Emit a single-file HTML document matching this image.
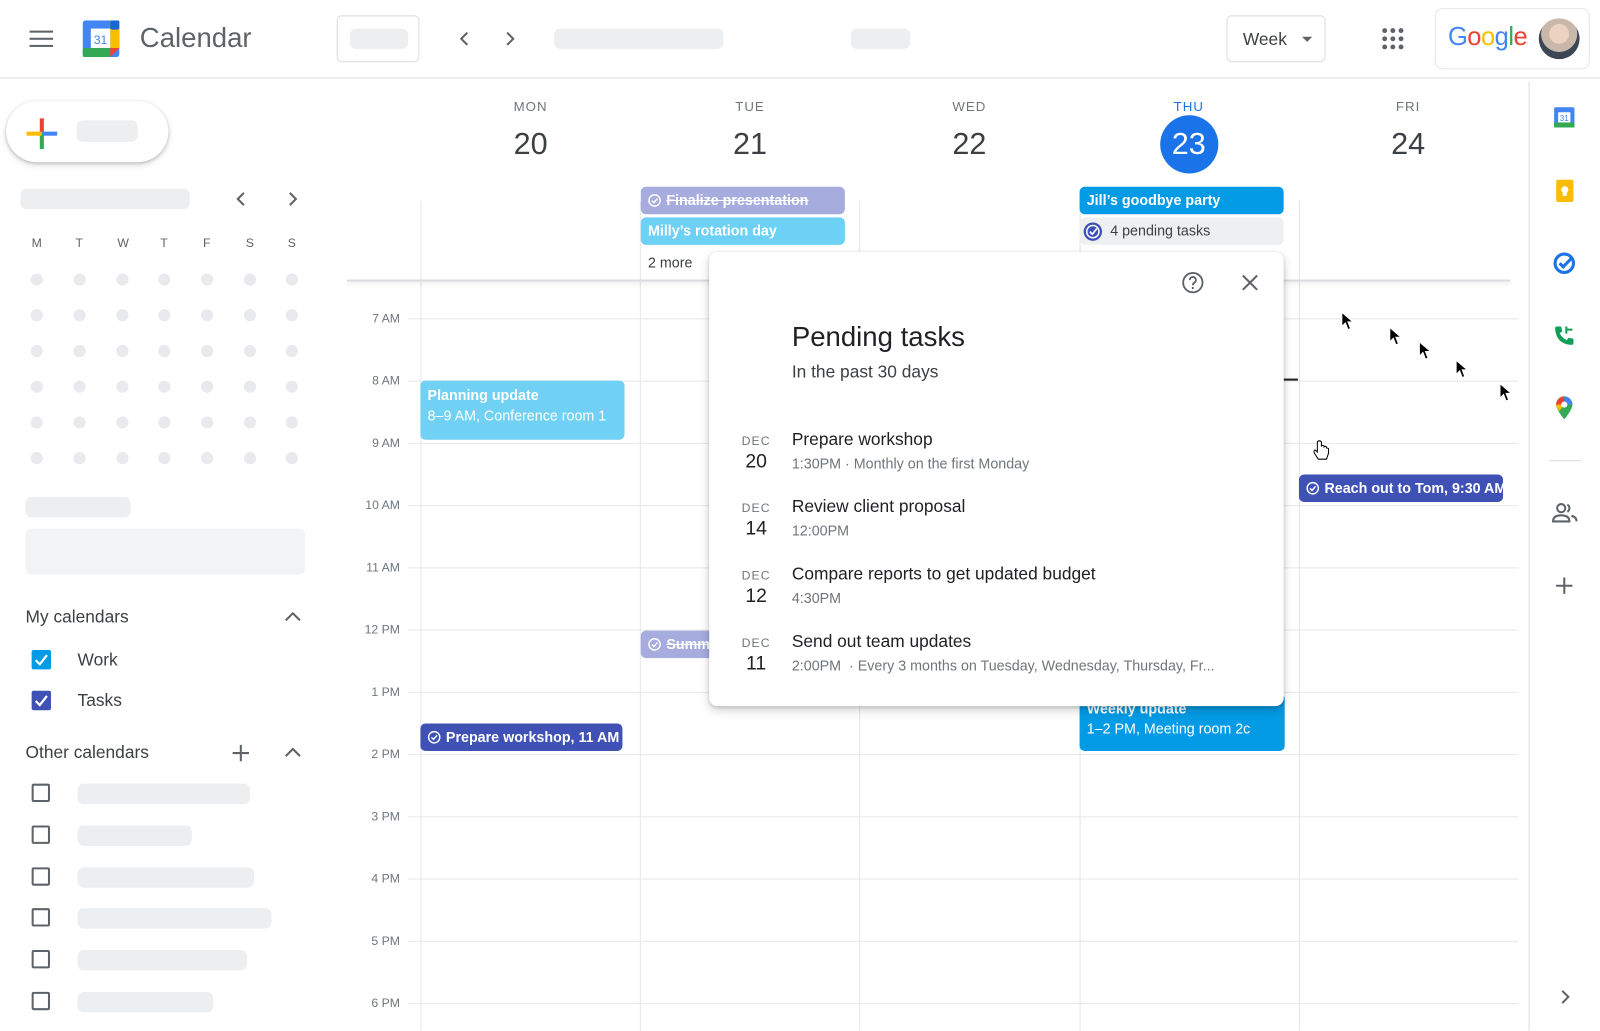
<!DOCTYPE html>
<html><head><meta charset="utf-8">
<style>
*{box-sizing:border-box;margin:0;padding:0}
html,body{width:1600px;height:1030px;overflow:hidden;background:#fff;font-family:"Liberation Sans",Arial,sans-serif;color:#3c4043}
#w{position:absolute;left:0;top:0;width:1568px;height:1010px;transform:scale(1.0204);transform-origin:0 0}
.a{position:absolute}
.sk{position:absolute;background:#eceef0;border-radius:6px}
.dot{position:absolute;width:12px;height:12px;border-radius:50%;background:#e8eaed}
.vl{position:absolute;width:1px;background:#e3e5e8}
.hl{position:absolute;height:1px;background:#e6e8eb;left:400px;width:1088px}
.tl{position:absolute;left:340px;width:52px;text-align:right;font-size:12px;color:#70757a}
.ev{position:absolute;border-radius:5px;color:#fff;font-size:14px;font-weight:bold;padding:0 7px;white-space:nowrap;overflow:hidden;line-height:27px}
.ck{display:inline-block;vertical-align:-2px;margin-right:5px}
.dn{position:absolute;width:100px;text-align:center;font-size:13px;color:#70757a;letter-spacing:1px}
.dd{position:absolute;width:100px;text-align:center;font-size:30px;color:#3c4043}
.cb{position:absolute;width:18px;height:18px;border:2px solid #5f6368;border-radius:2px}
.cbf{position:absolute;width:19px;height:19px;border-radius:2px}
.pt{position:absolute;left:776px;font-size:17px;color:#202124}
.ps{position:absolute;left:776px;font-size:14px;color:#70757a}
.pm{position:absolute;left:722px;width:38px;text-align:center;font-size:12px;color:#70757a;letter-spacing:1px}
.pd{position:absolute;left:722px;width:38px;text-align:center;font-size:19px;color:#202124}
</style></head><body><div id="w">

<!-- header -->
<div class="a" style="left:0;top:76px;width:1568px;height:1px;background:#dadce0"></div>
<div class="a" style="left:29px;top:30px;width:23px;height:2px;background:#5f6368;box-shadow:0 7px 0 #5f6368,0 14px 0 #5f6368"></div>
<svg class="a" style="left:81px;top:20px" width="36" height="36" viewBox="0 0 36 36">
<rect x="0" y="0" width="36" height="36" rx="3" fill="#4285f4"/>
<rect x="27" y="0" width="9" height="27" fill="#fbbc04"/><rect x="27" y="0" width="9" height="9" rx="2" fill="#1967d2"/>
<rect x="0" y="27" width="27" height="9" rx="2" fill="#34a853"/><polygon points="27,27 36,27 27,36" fill="#ea4335"/>
<rect x="8" y="8" width="19" height="19" fill="#fff"/>
<text x="17.5" y="23" font-size="12" text-anchor="middle" fill="#4285f4" font-family="Liberation Sans">31</text></svg>
<div class="a" style="left:137px;top:22px;font-size:27px;color:#5f6368">Calendar</div>
<div class="a" style="left:330px;top:15px;width:81px;height:46px;border:1px solid #dadce0;border-radius:5px"></div>
<div class="sk" style="left:343px;top:28px;width:57px;height:20px"></div>
<svg class="a" style="left:446px;top:29px" width="18" height="18"><path d="M12 3 L6 9 L12 15" stroke="#5f6368" stroke-width="2" fill="none"/></svg>
<svg class="a" style="left:491px;top:29px" width="18" height="18"><path d="M6 3 L12 9 L6 15" stroke="#5f6368" stroke-width="2" fill="none"/></svg>
<div class="sk" style="left:543px;top:28px;width:166px;height:20px"></div>
<div class="sk" style="left:834px;top:28px;width:58px;height:20px"></div>
<div class="a" style="left:1202px;top:15px;width:97px;height:46px;border:1px solid #dadce0;border-radius:5px"></div>
<div class="a" style="left:1218px;top:29px;font-size:17px;color:#3c4043">Week</div>
<div class="a" style="left:1276px;top:36px;border-left:5px solid transparent;border-right:5px solid transparent;border-top:5px solid #5f6368"></div>
<svg class="a" style="left:1354px;top:27px" width="22" height="22"><g fill="#5f6368"><circle cx="3" cy="3" r="2.4"/><circle cx="11" cy="3" r="2.4"/><circle cx="19" cy="3" r="2.4"/><circle cx="3" cy="11" r="2.4"/><circle cx="11" cy="11" r="2.4"/><circle cx="19" cy="11" r="2.4"/><circle cx="3" cy="19" r="2.4"/><circle cx="11" cy="19" r="2.4"/><circle cx="19" cy="19" r="2.4"/></g></svg>
<div class="a" style="left:1406px;top:8px;width:152px;height:60px;border:1px solid #e3e5e8;border-radius:8px"></div>
<div class="a" style="left:1419px;top:22px;font-size:25px;letter-spacing:-0.5px"><span style="color:#4285f4">G</span><span style="color:#ea4335">o</span><span style="color:#fbbc04">o</span><span style="color:#4285f4">g</span><span style="color:#34a853">l</span><span style="color:#ea4335">e</span></div>
<div class="a" style="left:1508px;top:18px;width:40px;height:40px;border-radius:50%;background:radial-gradient(circle at 50% 38%,#ecd2c0 0 30%,#c9b8aa 31% 55%,#3c4654 56%)"></div>

<!-- left sidebar -->
<div class="a" style="left:6px;top:99px;width:159px;height:60px;border-radius:30px;box-shadow:0 1px 3px rgba(60,64,67,.3),0 3px 6px rgba(60,64,67,.15);background:#fff"></div>
<svg class="a" style="left:25px;top:115px" width="32" height="32"><rect x="14" y="1" width="4" height="15" fill="#ea4335"/><rect x="16" y="14" width="15" height="4" fill="#4285f4"/><rect x="14" y="16" width="4" height="15" fill="#34a853"/><rect x="1" y="14" width="15" height="4" fill="#fbbc04"/></svg>
<div class="sk" style="left:75px;top:118px;width:60px;height:21px"></div>
<div class="sk" style="left:20px;top:185px;width:166px;height:20px"></div>
<svg class="a" style="left:228px;top:187px" width="16" height="16"><path d="M11 2 L5 8 L11 14" stroke="#5f6368" stroke-width="2" fill="none"/></svg>
<svg class="a" style="left:279px;top:187px" width="16" height="16"><path d="M5 2 L11 8 L5 14" stroke="#5f6368" stroke-width="2" fill="none"/></svg>
<div class="a" style="left:31px;top:231px;font-size:12px;color:#5f6368;width:270px">
<span class="a" style="left:0">M</span><span class="a" style="left:43px">T</span><span class="a" style="left:84px">W</span><span class="a" style="left:126px">T</span><span class="a" style="left:168px">F</span><span class="a" style="left:210px">S</span><span class="a" style="left:251px">S</span></div>
<div id="mini"></div>
<div class="sk" style="left:25px;top:487px;width:103px;height:20px"></div>
<div class="sk" style="left:25px;top:518px;width:274px;height:45px;background:#f1f3f4"></div>
<div class="a" style="left:25px;top:595px;font-size:17px;color:#3c4043">My calendars</div>
<svg class="a" style="left:278px;top:597px" width="18" height="14"><path d="M2 11 L9 4 L16 11" stroke="#5f6368" stroke-width="2" fill="none"/></svg>
<div class="cbf" style="left:31px;top:637px;background:#039be5"></div>
<svg class="a" style="left:31px;top:637px" width="19" height="19"><path d="M4 10 L8 14 L15 5" stroke="#fff" stroke-width="2.2" fill="none"/></svg>
<div class="a" style="left:76px;top:637px;font-size:17px">Work</div>
<div class="cbf" style="left:31px;top:677px;background:#3f51b5"></div>
<svg class="a" style="left:31px;top:677px" width="19" height="19"><path d="M4 10 L8 14 L15 5" stroke="#fff" stroke-width="2.2" fill="none"/></svg>
<div class="a" style="left:76px;top:677px;font-size:17px">Tasks</div>
<div class="a" style="left:25px;top:728px;font-size:17px">Other calendars</div>
<svg class="a" style="left:227px;top:729px" width="18" height="18"><path d="M9 1 V17 M1 9 H17" stroke="#5f6368" stroke-width="2"/></svg>
<svg class="a" style="left:278px;top:730px" width="18" height="14"><path d="M2 11 L9 4 L16 11" stroke="#5f6368" stroke-width="2" fill="none"/></svg>
<div class="cb" style="left:31px;top:768px"></div><div class="sk" style="left:76px;top:768px;width:169px;height:20px"></div>
<div class="cb" style="left:31px;top:809px"></div><div class="sk" style="left:76px;top:809px;width:112px;height:20px"></div>
<div class="cb" style="left:31px;top:850px"></div><div class="sk" style="left:76px;top:850px;width:173px;height:20px"></div>
<div class="cb" style="left:31px;top:890px"></div><div class="sk" style="left:76px;top:890px;width:190px;height:20px"></div>
<div class="cb" style="left:31px;top:931px"></div><div class="sk" style="left:76px;top:931px;width:166px;height:20px"></div>
<div class="cb" style="left:31px;top:972px"></div><div class="sk" style="left:76px;top:972px;width:133px;height:20px"></div>

<!-- day headers -->
<div class="dn" style="left:470px;top:97px">MON</div><div class="dd" style="left:470px;top:125px">20</div>
<div class="dn" style="left:685px;top:97px">TUE</div><div class="dd" style="left:685px;top:125px">21</div>
<div class="dn" style="left:900px;top:97px">WED</div><div class="dd" style="left:900px;top:125px">22</div>
<div class="dn" style="left:1115px;top:97px;color:#1a73e8">THU</div>
<div class="a" style="left:1137px;top:113px;width:57px;height:57px;border-radius:50%;background:#1a73e8"></div>
<div class="dd" style="left:1115px;top:125px;color:#fff">23</div>
<div class="dn" style="left:1330px;top:97px">FRI</div><div class="dd" style="left:1330px;top:125px">24</div>

<!-- grid -->
<div class="vl" style="left:412px;top:197px;height:813px"></div>
<div class="vl" style="left:627px;top:197px;height:813px"></div>
<div class="vl" style="left:842px;top:197px;height:813px"></div>
<div class="vl" style="left:1058px;top:197px;height:813px"></div>
<div class="vl" style="left:1273px;top:197px;height:813px"></div>
<div class="a" style="left:340px;top:274px;width:1140px;height:2px;background:#dadce0;box-shadow:0 2px 4px rgba(0,0,0,.12)"></div>
<div class="hl" style="top:312px"></div><div class="hl" style="top:373px"></div><div class="hl" style="top:434px"></div>
<div class="hl" style="top:495px"></div><div class="hl" style="top:556px"></div><div class="hl" style="top:617px"></div>
<div class="hl" style="top:678px"></div><div class="hl" style="top:739px"></div><div class="hl" style="top:800px"></div>
<div class="hl" style="top:861px"></div><div class="hl" style="top:922px"></div><div class="hl" style="top:983px"></div>
<div class="tl" style="top:305px">7 AM</div><div class="tl" style="top:366px">8 AM</div><div class="tl" style="top:427px">9 AM</div>
<div class="tl" style="top:488px">10 AM</div><div class="tl" style="top:549px">11 AM</div><div class="tl" style="top:610px">12 PM</div>
<div class="tl" style="top:671px">1 PM</div><div class="tl" style="top:732px">2 PM</div><div class="tl" style="top:793px">3 PM</div>
<div class="tl" style="top:854px">4 PM</div><div class="tl" style="top:915px">5 PM</div><div class="tl" style="top:976px">6 PM</div>
<div class="a" style="left:1498px;top:80px;width:1px;height:930px;background:#dadce0"></div>

<!-- events -->
<div class="ev" style="left:628px;top:183px;width:200px;height:27px;background:#a7acdf"><svg class="ck" width="13" height="13"><circle cx="6.5" cy="6.5" r="5.5" fill="none" stroke="#fff" stroke-width="1.4"/><path d="M3.8 6.6 L5.8 8.6 L9.3 4.6" stroke="#fff" stroke-width="1.4" fill="none"/></svg><span style="text-decoration:line-through">Finalize presentation</span></div>
<div class="ev" style="left:628px;top:213px;width:200px;height:27px;background:#6dd0f5">Milly’s rotation day</div>
<div class="a" style="left:635px;top:249px;font-size:14px;color:#3c4043">2 more</div>
<div class="ev" style="left:1058px;top:183px;width:200px;height:27px;background:#039be5">Jill’s goodbye party</div>
<div class="ev" style="left:1058px;top:213px;width:200px;height:27px;background:#eeeff1;color:#3c4043;font-weight:normal;padding-left:30px">4 pending tasks</div>
<svg class="a" style="left:1061px;top:217px" width="20" height="20"><circle cx="10" cy="10" r="9" fill="#3f51b5"/><circle cx="10" cy="10" r="6" fill="none" stroke="#fff" stroke-width="1.5"/><path d="M7 10 L9.5 12.5 L14 7" stroke="#fff" stroke-width="1.6" fill="none"/></svg>
<div class="ev" style="left:412px;top:373px;width:200px;height:58px;background:#70d1f4;line-height:20px;padding-top:4px">Planning update<br><span style="font-weight:normal">8–9 AM, Conference room 1</span></div>
<div class="ev" style="left:628px;top:618px;width:80px;height:27px;background:#a7acdf"><svg class="ck" width="13" height="13"><circle cx="6.5" cy="6.5" r="5.5" fill="none" stroke="#fff" stroke-width="1.4"/><path d="M3.8 6.6 L5.8 8.6 L9.3 4.6" stroke="#fff" stroke-width="1.4" fill="none"/></svg><span style="text-decoration:line-through">Summ</span></div>
<div class="ev" style="left:412px;top:709px;width:198px;height:27px;background:#3f51b5"><svg class="ck" width="13" height="13"><circle cx="6.5" cy="6.5" r="5.5" fill="none" stroke="#fff" stroke-width="1.4"/><path d="M3.8 6.6 L5.8 8.6 L9.3 4.6" stroke="#fff" stroke-width="1.4" fill="none"/></svg>Prepare workshop, 11 AM</div>
<div class="ev" style="left:1273px;top:465px;width:200px;height:27px;background:#3f51b5"><svg class="ck" width="13" height="13"><circle cx="6.5" cy="6.5" r="5.5" fill="none" stroke="#fff" stroke-width="1.4"/><path d="M3.8 6.6 L5.8 8.6 L9.3 4.6" stroke="#fff" stroke-width="1.4" fill="none"/></svg>Reach out to Tom, 9:30 AM</div>
<div class="ev" style="left:1058px;top:680px;width:201px;height:56px;background:#039be5;line-height:20px;padding-top:4px">Weekly update<br><span style="font-weight:normal">1–2 PM, Meeting room 2c</span></div>
<div class="a" style="left:1258px;top:371px;width:14px;height:2px;background:#202124"></div>

<!-- popup -->
<div class="a" style="left:695px;top:247px;width:563px;height:445px;background:#fff;border-radius:8px;box-shadow:0 4px 10px rgba(0,0,0,.18),0 1px 3px rgba(0,0,0,.15)"></div>
<svg class="a" style="left:1157px;top:265px" width="24" height="24"><circle cx="12" cy="12" r="9.5" fill="none" stroke="#5f6368" stroke-width="1.8"/><path d="M9 9.5 a3 3 0 1 1 4.5 2.5 c-1 .6 -1.5 1.2 -1.5 2.5" fill="none" stroke="#5f6368" stroke-width="1.8"/><circle cx="12" cy="17.2" r="1.1" fill="#5f6368"/></svg>
<svg class="a" style="left:1216px;top:268px" width="18" height="18"><path d="M2 2 L16 16 M16 2 L2 16" stroke="#5f6368" stroke-width="2"/></svg>
<div class="a" style="left:776px;top:315px;font-size:27px;color:#202124">Pending tasks</div>
<div class="a" style="left:776px;top:355px;font-size:17px;color:#3c4043">In the past 30 days</div>
<div class="pm" style="top:425px">DEC</div><div class="pd" style="top:442px">20</div>
<div class="pt" style="top:421px">Prepare workshop</div><div class="ps" style="top:446px">1:30PM · Monthly on the first Monday</div>
<div class="pm" style="top:491px">DEC</div><div class="pd" style="top:508px">14</div>
<div class="pt" style="top:487px">Review client proposal</div><div class="ps" style="top:512px">12:00PM</div>
<div class="pm" style="top:557px">DEC</div><div class="pd" style="top:574px">12</div>
<div class="pt" style="top:553px">Compare reports to get updated budget</div><div class="ps" style="top:578px">4:30PM</div>
<div class="pm" style="top:623px">DEC</div><div class="pd" style="top:640px">11</div>
<div class="pt" style="top:619px">Send out team updates</div><div class="ps" style="top:644px;white-space:nowrap">2:00PM&nbsp; · Every 3 months on Tuesday, Wednesday, Thursday, Fr...</div>

<!-- cursors -->
<svg class="a" style="left:1314px;top:305px" width="14" height="20"><path d="M1 1 L1 15 L4.5 11.5 L7 18 L9.5 17 L7 10.5 L12 10.5 Z" fill="#000" stroke="#fff" stroke-width="1"/></svg>
<svg class="a" style="left:1361px;top:320px" width="14" height="20"><path d="M1 1 L1 15 L4.5 11.5 L7 18 L9.5 17 L7 10.5 L12 10.5 Z" fill="#000" stroke="#fff" stroke-width="1"/></svg>
<svg class="a" style="left:1390px;top:334px" width="14" height="20"><path d="M1 1 L1 15 L4.5 11.5 L7 18 L9.5 17 L7 10.5 L12 10.5 Z" fill="#000" stroke="#fff" stroke-width="1"/></svg>
<svg class="a" style="left:1426px;top:352px" width="14" height="20"><path d="M1 1 L1 15 L4.5 11.5 L7 18 L9.5 17 L7 10.5 L12 10.5 Z" fill="#000" stroke="#fff" stroke-width="1"/></svg>
<svg class="a" style="left:1469px;top:375px" width="14" height="20"><path d="M1 1 L1 15 L4.5 11.5 L7 18 L9.5 17 L7 10.5 L12 10.5 Z" fill="#000" stroke="#fff" stroke-width="1"/></svg>
<svg class="a" style="left:1285px;top:431px" width="20" height="22"><path d="M6 2 V12 L4 10 Q2 10 3 13 L7 19 H15 L17 13 V9 Q17 8 15 8 V7 Q14 6 12.5 7 V6 Q11 5 10 6 V2 Q8 0 6 2Z" fill="#fff" stroke="#000" stroke-width="1"/></svg>

<!-- right rail -->
<svg class="a" style="left:1523px;top:105px" width="20" height="20"><rect width="20" height="20" rx="2" fill="#4285f4"/><rect x="0" y="15" width="20" height="5" fill="#34a853"/><rect x="4" y="5" width="12" height="10" fill="#fff"/><text x="10" y="13.5" font-size="8" text-anchor="middle" fill="#4285f4" font-family="Liberation Sans">31</text></svg>
<svg class="a" style="left:1525px;top:176px" width="17" height="22"><rect width="17" height="22" rx="2" fill="#fbbc04"/><circle cx="8.5" cy="10" r="3.5" fill="#fff"/><rect x="6.5" y="13" width="4" height="3" fill="#fff"/></svg>
<svg class="a" style="left:1522px;top:247px" width="22" height="22"><circle cx="11" cy="11" r="9" fill="none" stroke="#1a73e8" stroke-width="3"/><path d="M6.5 11 L10 14.5 L19 5" stroke="#1a73e8" stroke-width="3" fill="none"/></svg>
<svg class="a" style="left:1522px;top:318px" width="22" height="22"><path d="M4 2 L8 2 L9 7 L6.5 8.5 Q8.5 13 13.5 15.5 L15 13 L20 14 L20 18 Q20 20 18 20 Q3 19 2 4 Q2 2 4 2Z" fill="#0f9d58"/><path d="M13 2 V9 M13 5 H19" stroke="#0f9d58" stroke-width="2"/></svg>
<svg class="a" style="left:1524px;top:388px" width="18" height="24"><path d="M9 23 Q1 13 1 8.5 A8 8 0 0 1 17 8.5 Q17 13 9 23Z" fill="#34a853"/><path d="M1 8.5 A8 8 0 0 1 9 .5 V8.5Z" fill="#ea4335"/><path d="M9 .5 A8 8 0 0 1 17 8.5 H9Z" fill="#4285f4"/><path d="M1 8.5 H9 L4 15 Q1 11 1 8.5Z" fill="#fbbc04"/><circle cx="9" cy="8.5" r="3" fill="#fff"/></svg>
<div class="a" style="left:1518px;top:451px;width:32px;height:1px;background:#dadce0"></div>
<svg class="a" style="left:1521px;top:492px" width="26" height="22"><circle cx="9" cy="6" r="4" fill="none" stroke="#5f6368" stroke-width="2"/><path d="M1 19 Q1 13 9 13 Q17 13 17 19 Z" fill="none" stroke="#5f6368" stroke-width="2"/><path d="M15 2.5 A4 4 0 0 1 15 9.5 M19 13.5 Q24 14.5 24 19" fill="none" stroke="#5f6368" stroke-width="2"/></svg>
<svg class="a" style="left:1524px;top:565px" width="18" height="18"><path d="M9 1 V17 M1 9 H17" stroke="#5f6368" stroke-width="2"/></svg>
<svg class="a" style="left:1527px;top:969px" width="14" height="16"><path d="M4 2 L10 8 L4 14" stroke="#5f6368" stroke-width="2" fill="none"/></svg>

<script>
var m=document.getElementById('mini'),xs=[36,78,120,161,203,245,286],ys=[274,309,344,379,414,449],h='';
ys.forEach(function(y){xs.forEach(function(x){h+='<div class="dot" style="left:'+(x-6)+'px;top:'+(y-6)+'px"></div>';});});
m.innerHTML=h;
</script>
</div></body></html>
